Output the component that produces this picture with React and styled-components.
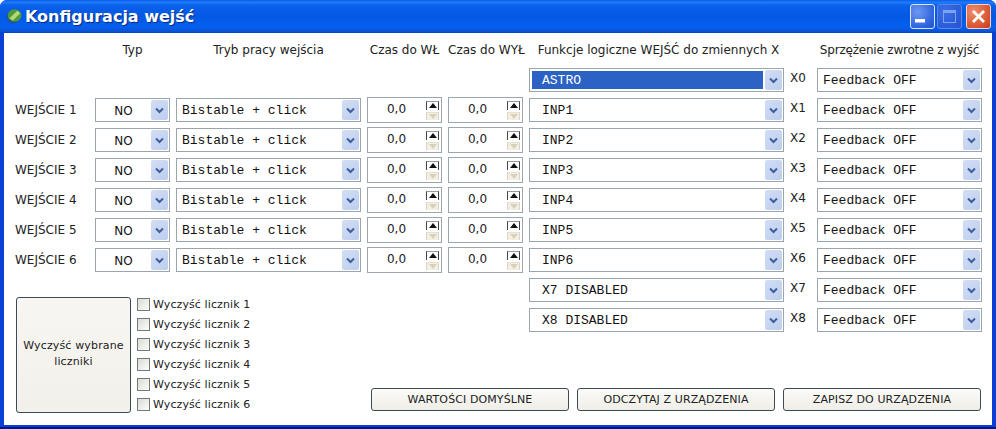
import React from 'react'
import styled, { createGlobalStyle } from 'styled-components'

const GlobalStyle = createGlobalStyle`
    html, body {
        margin: 0;
        padding: 0;
        background: #fff;
    }

    body {
        font-family: "DejaVu Sans", "Liberation Sans", sans-serif;
        font-size: 11px;
        color: #222;
    }
`

const Frame = styled.div`
    width: 996px;
    height: 429px;
    box-sizing: border-box;
    display: flex;
    flex-direction: column;
    background: #0a3fd6;
    border-radius: 7px 7px 0 0;
    overflow: hidden;
    box-shadow: inset 0 -1px 0 #001c8c, inset 0 -2px 0 #00148a;
`

const TitleBar = styled.div`
    height: 33px;
    flex: none;
    display: flex;
    align-items: center;
    padding: 0 5px 1px 6px;
    box-sizing: border-box;
    background: linear-gradient(180deg, #0a5be8 0%, #1f7cfb 7%, #0a61ea 16%, #0458e4 50%, #0560ef 80%, #0a55d8 94%, #0441c4 100%);
`

const TitleText = styled.span`
    margin-left: 3px;
    font-family: "DejaVu Sans", sans-serif;
    font-size: 16px;
    font-weight: bold;
    color: #fff;
    text-shadow: 1px 1px 1px #0a2a80;
    flex: 1;
`

const WindowButtons = styled.div`
    display: flex;
    gap: 2px;
`

const WindowButton = styled.div`
    width: 25px;
    height: 25px;
    box-sizing: border-box;
    border: 1px solid ${p => p.$close ? '#f3d6c8' : p.$off ? '#5f88e2' : '#dbe6fb'};
    border-radius: 3px;
    display: flex;
    align-items: center;
    justify-content: center;
    margin-left: ${p => p.$close ? '2px' : '0'};
    background: ${p => p.$close
        ? 'radial-gradient(circle at 30% 30%, #ee8f6c, #d8512f 70%, #c23c1c)'
        : p.$off
            ? 'radial-gradient(circle at 30% 30%, #3a6fe6, #2b5bd8 70%, #2a55cf)'
            : 'radial-gradient(circle at 30% 30%, #6d98f2, #2f62dc 70%, #2853cb)'};
`

const Client = styled.div`
    flex: 1;
    margin: 0 4px 4px 4px;
    background: #fff;
    padding: 5px 10px 0 11px;
    display: grid;
    grid-template-columns: 74px 75px 185px 75px 75px 255px 21px 165px;
    grid-template-rows: repeat(10, 24px) 74px;
    column-gap: 6px;
    row-gap: 6px;
`

const Heading = styled.div`
    grid-column: ${p => p.$col};
    grid-row: 1;
    text-align: center;
    align-self: center;
    white-space: nowrap;
    margin-top: -1px;
    font-size: 12px;
    letter-spacing: ${p => p.$tight ? '-0.2px' : '0'};
    padding-left: ${p => p.$shift || '0'};
`

const RowLabel = styled.div`
    grid-column: 1;
    grid-row: ${p => p.$row};
    align-self: center;
    white-space: nowrap;
    font-size: 12px;
`

const XLabel = styled.div`
    grid-column: 7;
    grid-row: ${p => p.$row};
    margin-top: 3px;
    white-space: nowrap;
    font-size: 12px;
`

const ComboBox = styled.div`
    grid-column: ${p => p.$col};
    grid-row: ${p => p.$row};
    box-sizing: border-box;
    height: 24px;
    display: flex;
    align-items: center;
    padding: 2px 1px 2px 2px;
    border: 1px solid #9aa5ad;
    background: #fff;
`

const ComboValue = styled.div`
    flex: 1;
    height: 100%;
    box-sizing: border-box;
    display: flex;
    align-items: center;
    justify-content: ${p => p.$center ? 'center' : 'flex-start'};
    padding-left: ${p => p.$center ? '0' : p.$indent};
    padding-top: 1px;
    font-family: ${p => p.$center ? '"DejaVu Sans", sans-serif' : '"Liberation Mono", monospace'};
    font-size: ${p => p.$center ? '12px' : '13px'};
    white-space: nowrap;
    color: ${p => p.$selected ? '#fff' : '#111'};
    background: ${p => p.$selected ? '#2c62c4' : 'transparent'};
`

const ComboArrow = styled.div`
    width: 17px;
    height: 20px;
    flex: none;
    margin-left: 2px;
    border-radius: 2px;
    display: flex;
    align-items: center;
    justify-content: center;
    background: linear-gradient(135deg, #d3def5, #bccdee);
`

const SpinBox = styled.div`
    grid-column: ${p => p.$col};
    grid-row: ${p => p.$row};
    box-sizing: border-box;
    height: 26px;
    margin-top: -1px;
    border: 1px solid #9aa5ad;
    display: flex;
    align-items: center;
    padding: 2px 2px 2px 0;
`

const SpinValue = styled.div`
    flex: 1;
    text-align: center;
    font-size: 12px;
    margin-top: -3px;
    padding-right: 1px;
`

const SpinButtons = styled.div`
    width: 13px;
    display: flex;
    flex-direction: column;
    gap: 2px;
`

const SpinButton = styled.div`
    height: ${p => p.$off ? '8px' : '9px'};
    box-sizing: border-box;
    display: flex;
    align-items: center;
    justify-content: center;
    background: ${p => p.$off ? '#f5efe2' : '#fff'};
    border-left: 1px solid ${p => p.$off ? '#d8d4c6' : '#444'};
    border-right: 1px solid ${p => p.$off ? '#d8d4c6' : '#444'};
    border-top: 1px solid ${p => p.$off ? '#e4e0d2' : '#999'};
`

const SpinTriangle = styled.div`
    width: 0;
    height: 0;
    border-left: 4px solid transparent;
    border-right: 4px solid transparent;
    ${p => p.$off
        ? 'border-top: 5px solid #d6d0bc;'
        : 'border-bottom: 5px solid #111;'}
`

const CounterPanel = styled.div`
    grid-column: 1 / 4;
    grid-row: 9 / 12;
    margin: 19px 0 0 1px;
    display: flex;
    gap: 6px;
`

const BigButton = styled.div`
    width: 115px;
    height: 116px;
    box-sizing: border-box;
    border: 1px solid #3a4a58;
    border-radius: 3px;
    background: linear-gradient(180deg, #f7f6f2, #f2f0ea);
    display: flex;
    align-items: center;
    justify-content: center;
    text-align: center;
    line-height: 16px;
    padding-bottom: 2px;
    letter-spacing: 0.15px;
`

const CheckList = styled.div`
    display: flex;
    flex-direction: column;
    gap: 7px;
    padding-top: 1px;
`

const CheckRow = styled.div`
    display: flex;
    align-items: center;
    gap: 3px;
    height: 13px;
    white-space: nowrap;
    letter-spacing: 0.1px;
`

const CheckBox = styled.div`
    width: 13px;
    height: 13px;
    box-sizing: border-box;
    border: 1px solid #707a7c;
    background: linear-gradient(135deg, #dcdcd6, #fbfbf9);
`

const ActionBar = styled.div`
    grid-column: 4 / -1;
    grid-row: 11;
    align-self: end;
    display: flex;
    gap: 8px;
    padding-left: 4px;
    margin-bottom: 1px;
`

const ActionButton = styled.div`
    width: 198px;
    height: 23px;
    box-sizing: border-box;
    border: 1px solid #3a4a58;
    border-radius: 3px;
    background: linear-gradient(180deg, #fbfbf8, #efede6);
    display: flex;
    align-items: center;
    justify-content: center;
    white-space: nowrap;
    letter-spacing: 0.1px;
`

const Chevron = () => (
    <svg width="9" height="7" viewBox="0 0 9 7">
        <path d="M1 1.5 L4.5 5 L8 1.5" fill="none" stroke="#3e5f9e" strokeWidth="2" />
    </svg>
)

const Combo = ({ col, row, value, center, indent = '3px', selected }) => (
    <ComboBox $col={col} $row={row}>
        <ComboValue $center={center} $indent={indent} $selected={selected}>{value}</ComboValue>
        <ComboArrow><Chevron /></ComboArrow>
    </ComboBox>
)

const Spin = ({ col, row }) => (
    <SpinBox $col={col} $row={row}>
        <SpinValue>0,0</SpinValue>
        <SpinButtons>
            <SpinButton><SpinTriangle /></SpinButton>
            <SpinButton $off><SpinTriangle $off /></SpinButton>
        </SpinButtons>
    </SpinBox>
)

const logicValues = ['ASTRO', 'INP1', 'INP2', 'INP3', 'INP4', 'INP5', 'INP6', 'X7 DISABLED', 'X8 DISABLED']
const inputs = [1, 2, 3, 4, 5, 6]

const App = () => {

    return (
        <Frame>
            <GlobalStyle />
            <TitleBar>
                <svg width="16" height="16" viewBox="0 0 14 14">
                    <circle cx="6" cy="8" r="5.5" fill="#1f4f9e" />
                    <ellipse cx="7.5" cy="6.5" rx="6" ry="5.5" fill="#4f9a3c" />
                    <path d="M3 9 L10 2.5 L12.5 4.5 L6 11 Z" fill="#b4d873" />
                </svg>
                <TitleText>Konfiguracja wejść</TitleText>
                <WindowButtons>
                    <WindowButton>
                        <svg width="15" height="15" viewBox="0 0 15 15">
                            <rect x="0" y="10" width="10" height="3.5" fill="#fff" />
                        </svg>
                    </WindowButton>
                    <WindowButton $off>
                        <svg width="15" height="15" viewBox="0 0 15 15">
                            <rect x="1.5" y="1.5" width="12" height="12" fill="none" stroke="#7fa2ee" />
                            <rect x="1.5" y="1.5" width="12" height="2.5" fill="#7fa2ee" />
                        </svg>
                    </WindowButton>
                    <WindowButton $close>
                        <svg width="15" height="15" viewBox="0 0 15 15">
                            <path d="M2 2 L13 13 M13 2 L2 13" stroke="#fff" strokeWidth="2.8" />
                        </svg>
                    </WindowButton>
                </WindowButtons>
            </TitleBar>
            <Client>
                <Heading $col={2}>Typ</Heading>
                <Heading $col={3}>Tryb pracy wejścia</Heading>
                <Heading $col={4}>Czas do WŁ</Heading>
                <Heading $col={5}>Czas do WYŁ</Heading>
                <Heading $col={6} $shift="4px">Funkcje logiczne WEJŚĆ do zmiennych X</Heading>
                <Heading $col={8} $tight>Sprzężenie zwrotne z wyjść</Heading>

                {inputs.map(n => (
                    <React.Fragment key={n}>
                        <RowLabel $row={n + 2}>WEJŚCIE {n}</RowLabel>
                        <Combo col={2} row={n + 2} value="NO" center />
                        <Combo col={3} row={n + 2} value="Bistable + click" />
                        <Spin col={4} row={n + 2} />
                        <Spin col={5} row={n + 2} />
                    </React.Fragment>
                ))}

                {logicValues.map((value, i) => (
                    <React.Fragment key={value}>
                        <Combo col={6} row={i + 2} value={value} indent="10px" selected={i === 0} />
                        <XLabel $row={i + 2}>X{i}</XLabel>
                        <Combo col={8} row={i + 2} value="Feedback OFF" />
                    </React.Fragment>
                ))}

                <CounterPanel>
                    <BigButton>Wyczyść wybrane<br />liczniki</BigButton>
                    <CheckList>
                        {inputs.map(n => (
                            <CheckRow key={n}>
                                <CheckBox />
                                Wyczyść licznik {n}
                            </CheckRow>
                        ))}
                    </CheckList>
                </CounterPanel>

                <ActionBar>
                    <ActionButton>WARTOŚCI DOMYŚLNE</ActionButton>
                    <ActionButton>ODCZYTAJ Z URZĄDZENIA</ActionButton>
                    <ActionButton>ZAPISZ DO URZĄDZENIA</ActionButton>
                </ActionBar>
            </Client>
        </Frame>
    )
}

export default App
